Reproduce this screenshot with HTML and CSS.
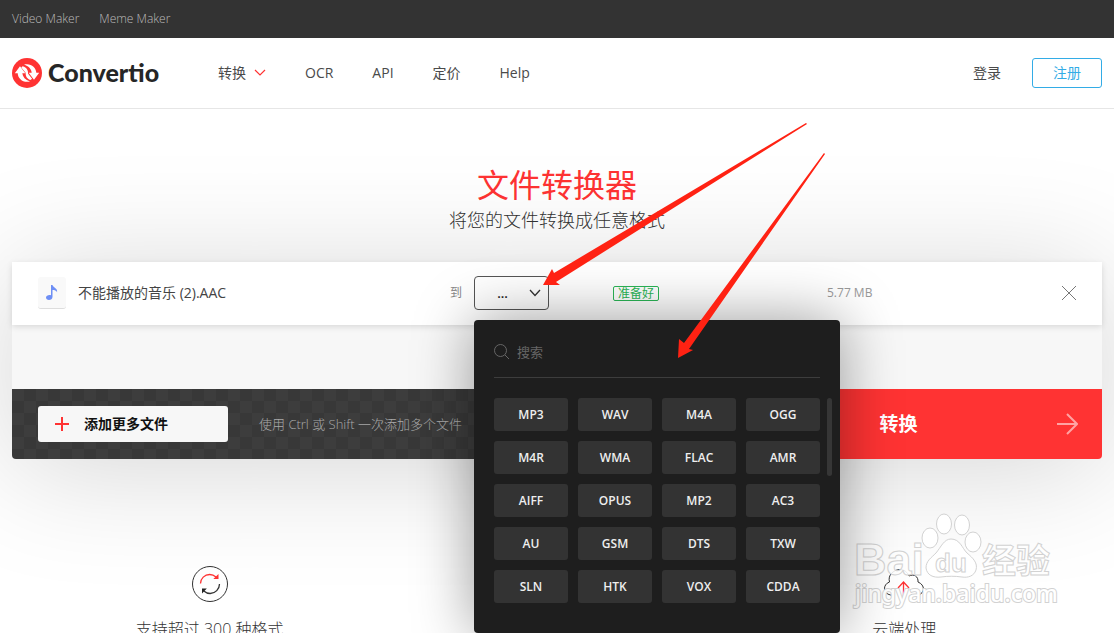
FILE: index.html
```html
<!DOCTYPE html>
<html lang="zh-CN">
<head>
<meta charset="utf-8">
<meta name="viewport" content="width=device-width, initial-scale=1">
<title>Convertio</title>
<link rel="stylesheet" href="styles.css">
</head>
<body>
<nav class="topbar">
  <a href="#">Video Maker</a>
  <a href="#">Meme Maker</a>
</nav>

<header class="header">
  <a class="logo" href="#">
    <svg class="logo-mark" viewBox="0 0 30 30" aria-hidden="true">
      <circle cx="15" cy="15" r="15" fill="#ff3333"/>
      <path d="M2.8 15.2 8 8.2l5.3 7h-3c.4 3.700 3 6.600 7.700 8.200C11.200 25 6 21 5.700 15.200z" fill="#fff"/>
      <path d="M27.200 14.800 22 21.800l-5.300-7h3C19.300 11.100 16.700 8.200 12 6.600 18.800 5 24 9 24.300 14.800z" fill="#fff"/>
      <path d="M10.600 8.300c4.400 1.300 5.500 4 5.500 7.400l4 5-1.700 1.300c-3.600-1.400-4.800-3.800-4.800-7.300L9.300 9.500z" fill="#fff"/>
    </svg>
    <span>Convertio</span>
  </a>
  <nav class="menu">
    <a href="#">转换
      <svg class="menu-chevron" viewBox="0 0 12 8" aria-hidden="true"><path d="M1 1l5 5 5-5" fill="none" stroke="#ff3333" stroke-width="1.200"/></svg>
    </a>
    <a href="#">OCR</a>
    <a href="#">API</a>
    <a href="#">定价</a>
    <a href="#">Help</a>
  </nav>
  <div class="account">
    <a href="#">登录</a>
    <a class="signup" href="#">注册</a>
  </div>
</header>

<main class="main">
  <h1>文件转换器</h1>
  <p class="subtitle">将您的文件转换成任意格式</p>

  <section class="converter">
    <div class="file-row">
      <div class="file-name">
        <span class="file-icon">
          <svg viewBox="0 0 12 15" aria-hidden="true"><path d="M5 0h1.500c.3 2.600 5.300 2.700 4.600 7.200C10.400 5.500 8.500 5 6.500 5v6.800C6.500 13.900 4.800 15 3 15 1.200 15 0 14.100 0 12.600c0-1.900 2.600-3.200 5-2.400z" fill="#6e8ff5"/></svg>
        </span>
        <span>不能播放的音乐 (2).AAC</span>
      </div>
      <div class="file-target">
        <label for="format">到</label>
        <div class="picker">
          <select id="format"><option>...</option></select>
          <svg class="picker-chevron" viewBox="0 0 12 8" aria-hidden="true"><path d="M1 1l5 5.500L11 1" fill="none" stroke="#333" stroke-width="1.300"/></svg>
          <div class="formats">
            <div class="search">
              <svg viewBox="0 0 16 16" aria-hidden="true"><circle cx="6.500" cy="6.500" r="6" fill="none" stroke="#666"/><path d="M11 11l4 4" stroke="#666" fill="none"/></svg>
              <input type="text" aria-label="搜索" placeholder="搜索">
            </div>
            <div class="format-list">
              <button>MP3</button><button>WAV</button><button>M4A</button><button>OGG</button>
              <button>M4R</button><button>WMA</button><button>FLAC</button><button>AMR</button>
              <button>AIFF</button><button>OPUS</button><button>MP2</button><button>AC3</button>
              <button>AU</button><button>GSM</button><button>DTS</button><button>TXW</button>
              <button>SLN</button><button>HTK</button><button>VOX</button><button>CDDA</button>
              <span class="scroll-thumb"></span>
            </div>
          </div>
        </div>
      </div>
      <div class="file-status"><span class="badge">准备好</span></div>
      <div class="file-size">5.77 MB</div>
      <button class="remove" aria-label="删除">
        <svg viewBox="0 0 14 14" aria-hidden="true"><path d="M0 0l14 14M14 0L0 14" stroke="#777" fill="none"/></svg>
      </button>
    </div>
    <div class="drop-space"></div>
    <div class="actions">
      <div class="add-area">
        <button class="add">
          <svg viewBox="0 0 14 14" aria-hidden="true"><path d="M7 0v14M0 7h14" stroke="#ff3333" stroke-width="2"/></svg>
          添加更多文件
        </button>
        <span class="hint">使用 Ctrl 或 Shift 一次添加多个文件</span>
      </div>
      <button class="convert">
        转换
        <svg viewBox="0 0 21 22" aria-hidden="true"><path d="M0 11h20M10 1l10 10-10 10" fill="none" stroke="#ffa3a3" stroke-width="2"/></svg>
      </button>
    </div>
  </section>

  <section class="features">
    <div class="feature">
      <svg viewBox="0 0 38 38" aria-hidden="true">
        <circle cx="19" cy="19" r="17.500" fill="none" stroke="#333"/>
        <path d="M9.500 18.500c0-5 4.200-9 9.200-9 2.800 0 4.500.9 6.300 2.400" fill="none" stroke="#ff3333" stroke-width="1.300"/>
        <path d="M27.500 9v5h-5.200z" fill="#ff3333"/>
        <path d="M28.500 19c0 5-4.200 9.500-9.300 9.500-2.800 0-4.700-1.100-6.400-2.600" fill="none" stroke="#333" stroke-width="1.300"/>
        <path d="M11 28.500v-5h4.800z" fill="#222"/>
      </svg>
      <h2>支持超过 300 种格式</h2>
    </div>
    <div class="feature feature-cloud">
      <svg viewBox="0 0 42 38" aria-hidden="true">
        <path d="M10 30H7.500C-.2 28.500-.5 19.500 6.500 17 4.500 10 10.500 5 16.500 4.500 21.500 4.500 24.500 7.500 26 11c5-2.500 9.500.5 9 6C42.500 20 42 28.500 35 30h-7" fill="#fff" stroke="#333"/>
        <path d="M20.500 31V17M15 23l5.500-6 5.500 6" fill="none" stroke="#ff3333" stroke-width="1.300"/>
      </svg>
      <h2>云端处理</h2>
    </div>
  </section>
</main>

<svg class="arrows" viewBox="0 0 284 238" aria-hidden="true">
  <path d="M1 163l9-16 2 4L264 1l1 1L14 160l4 3z" fill="#ff2213"/>
  <path d="M136 236l1-19 5 4L282 31l1 1L147 227l4 1z" fill="#ff2213"/>
</svg>

<svg class="watermark" viewBox="0 0 210 106" aria-hidden="true">
  <g fill="#fff" fill-opacity=".9" stroke="#d2d2d2">
    <text class="wm-brand" x="4" y="65">Bai</text>
    <ellipse cx="80" cy="28" rx="8" ry="10"/>
    <ellipse cx="94" cy="14" rx="7.500" ry="10"/>
    <ellipse cx="112" cy="15" rx="7.500" ry="10"/>
    <ellipse cx="123" cy="32" rx="8" ry="10"/>
    <path d="M101 29c9 0 11 9 16 14 6 5 11 10 9 17-2 6-8 8-14 7-7-1-14-1-21 0-8 1-14-2-15-9 0-7 5-10 10-15 5-6 8-14 15-14z"/>
    <text class="wm-du" x="85" y="62">du</text>
    <text class="wm-cjk" x="132" y="63">经验</text>
  </g>
  <text class="wm-url" x="5" y="92">jingyan.baidu.com</text>
</svg>
</body>
</html>
```
FILE: styles.css
```css
* { box-sizing: border-box; }
html { scrollbar-width: none; }
body {
  position: relative;
  margin: 0;
  overflow-x: hidden;
  background: #fff;
  color: #333;
  font: 300 14px/20px "Open Sans", "Noto Sans CJK SC", sans-serif;
}
a { color: inherit; text-decoration: none; }
button, input, select { font: inherit; color: inherit; }
button { border: 0; padding: 0; cursor: pointer; }
svg { display: block; flex: none; }

.topbar {
  display: flex;
  gap: 20px;
  align-items: center;
  height: 38px;
  padding: 0 12px;
  background: #333;
  color: #bbb;
  font-size: 12px;
}

.header {
  display: flex;
  align-items: center;
  height: 71px;
  padding: 0 12px;
  border-bottom: 1px solid #e6e6e6;
  color: #4a4a4a;
  font-weight: 400;
}
.logo {
  display: flex;
  gap: 6px;
  align-items: center;
  width: 206px;
  color: #262626;
  font: 900 25px/30px Lato, sans-serif;
}
.logo span { padding-bottom: 2px; }
.logo-mark { width: 30px; height: 30px; }
.menu { display: flex; gap: 39px; }
.menu a { display: flex; gap: 8px; align-items: center; }
.menu-chevron { width: 12px; height: 8px; }
.account {
  display: flex;
  gap: 31px;
  align-items: center;
  margin-left: auto;
}
.signup {
  padding: 4px 20px;
  border: 1px solid #33ace6;
  border-radius: 3px;
  color: #33ace6;
}

.main { padding: 56px 12px 0; text-align: center; }
h1 {
  margin: 0;
  color: #ff3333;
  font-size: 32px;
  font-weight: 400;
  line-height: 40px;
}
.subtitle { margin: 0 0 27px; font-size: 18px; line-height: 30px; }

.converter {
  position: relative;
  border-radius: 0 0 4px 4px;
  background: #f7f7f7;
  box-shadow: 0 10px 120px rgba(0, 0, 0, .17);
  text-align: left;
}
.file-row {
  position: relative;
  z-index: 2;
  display: grid;
  grid-template-columns: 412fr 163fr 214fr 235fr 14px;
  align-items: center;
  height: 63px;
  padding: 0 26px 2px;
  background: #fff;
  box-shadow: 0 2px 6px rgba(0, 0, 0, .12);
  font-weight: 400;
}
.file-name { display: flex; gap: 12px; align-items: center; color: #444; }
.file-icon {
  display: flex;
  align-items: center;
  justify-content: center;
  width: 28px;
  height: 32px;
  border-bottom: 1px solid #ddd;
  border-radius: 3px;
  background: #f9f9f9;
}
.file-icon svg { width: 12px; height: 15px; }
.file-target { display: flex; gap: 12px; align-items: center; color: #888; font-size: 12px; }
.picker { position: relative; width: 75px; color: #222; }
.picker select {
  display: block;
  width: 100%;
  height: 34px;
  padding: 0 18px 0 0;
  border: 1px solid #555;
  border-radius: 4px;
  appearance: none;
  background: none;
  font-size: 13px;
  font-weight: 600;
  text-align: center;
  text-align-last: center;
}
.picker-chevron {
  position: absolute;
  top: 13px;
  right: 8px;
  width: 12px;
  height: 8px;
  pointer-events: none;
}
.formats {
  position: absolute;
  top: 44px;
  left: 0;
  width: 366px;
  padding: 18px 20px 30px;
  border-radius: 4px;
  background: #1e1e1e;
  box-shadow: 0 0 60px rgba(0, 0, 0, .4);
}
.search {
  display: flex;
  gap: 7px;
  align-items: center;
  height: 40px;
  margin-bottom: 20px;
  padding-bottom: 10px;
  border-bottom: 1px solid #3d3d3d;
}
.search svg { width: 16px; height: 16px; }
.search input {
  min-width: 0;
  flex: 1;
  padding: 0;
  border: 0;
  outline: 0;
  background: none;
  color: #fff;
  font-size: 13px;
}
.search input::placeholder { color: #666; }
.format-list {
  position: relative;
  display: grid;
  grid-template-columns: repeat(4, 1fr);
  gap: 10px;
}
.format-list button {
  height: 33px;
  padding-top: 1px;
  border-radius: 3px;
  background: #333;
  color: #eee;
  font-size: 12px;
  font-weight: 600;
}
.scroll-thumb {
  position: absolute;
  top: 0;
  right: -12px;
  width: 5px;
  height: 78px;
  border-radius: 3px;
  background: #363636;
}
.file-status, .file-size { font-size: 12px; }
.file-status { padding-top: 2px; }
.file-size { color: #999; }
.badge {
  display: inline-block;
  padding: 0 4px;
  border: 1px solid #2bb656;
  border-radius: 2px;
  color: #2bb656;
  line-height: 13px;
}
.remove { background: none; }
.remove svg { width: 14px; height: 14px; }
.drop-space { height: 64px; }
.actions { display: flex; height: 70px; }
.add-area {
  display: flex;
  flex: 1;
  gap: 31px;
  align-items: center;
  padding-left: 26px;
  border-bottom-left-radius: 4px;
  background: repeating-conic-gradient(#383838 0 25%, #3d3d3d 0 50%) 0 0 / 24px 24px;
  color: #aaa;
}
.add {
  display: flex;
  gap: 15px;
  align-items: center;
  width: 190px;
  height: 36px;
  padding: 0 17px;
  border-radius: 3px;
  background: #f7f7f7;
  color: #111;
  font-weight: 600;
}
.add svg { width: 14px; height: 14px; }
.hint { font-size: 13px; }
.convert {
  display: flex;
  flex: 0 0 25%;
  align-items: center;
  justify-content: space-between;
  padding: 0 24px 0 50px;
  border-bottom-right-radius: 4px;
  background: #ff3333;
  color: #fff;
  font-size: 19px;
  font-weight: 700;
}
.convert svg { width: 21px; height: 22px; }

.features {
  display: grid;
  grid-template-columns: repeat(3, 1fr);
  padding: 106px 24px 0;
}
.feature {
  display: flex;
  flex-direction: column;
  gap: 14px;
  align-items: center;
}
.feature-cloud { grid-column: 3; }
.feature svg { height: 38px; }
.feature h2 { margin: 0; font-size: 16px; font-weight: 300; line-height: 24px; }

.arrows {
  position: absolute;
  z-index: 3;
  top: 122px;
  left: 542px;
  width: 284px;
  height: 238px;
  pointer-events: none;
}
.watermark {
  position: absolute;
  z-index: 1;
  top: 510px;
  left: 850px;
  width: 210px;
  height: 106px;
  pointer-events: none;
}
.wm-brand { font: 700 45px "Liberation Sans", sans-serif; }
.wm-du { font: 700 26px "Liberation Sans", sans-serif; }
.wm-cjk { font: 700 34px "Noto Sans CJK SC", sans-serif; }
.wm-url {
  fill: #fff;
  stroke: #d2d2d2;
  stroke-width: 2px;
  paint-order: stroke;
  font: 500 23px "Noto Sans", sans-serif;
}
```
